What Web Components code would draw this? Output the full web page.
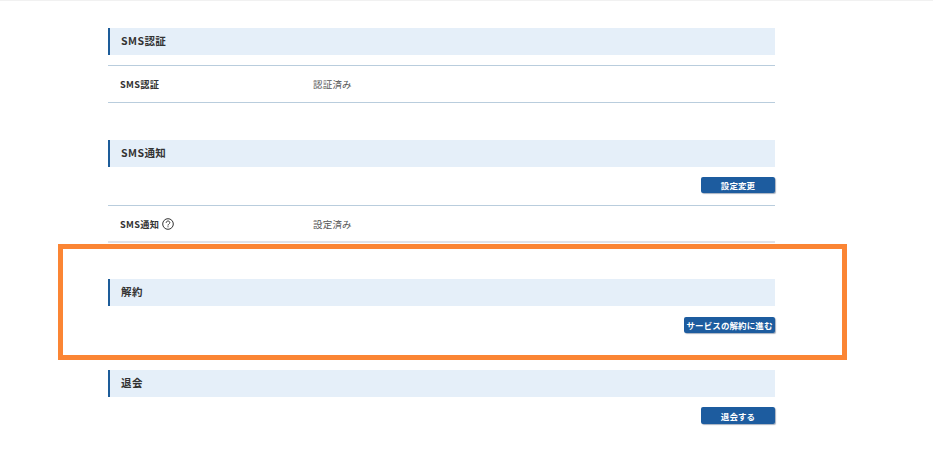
<!DOCTYPE html>
<html lang="ja">
<head>
<meta charset="utf-8">
<style>
html,body{margin:0;padding:0;background:#fff;}
body{width:933px;height:468px;overflow:hidden;position:relative;font-family:"Noto Sans CJK JP","Noto Sans",sans-serif;color:#333;}
</style>
</head>
<body>
<settings-page>
  <settings-section heading="SMS認証" style="height:112px">
    <settings-row label="SMS認証" value="認証済み" style="margin-top:10px"></settings-row>
  </settings-section>
  <settings-section heading="SMS通知" style="height:139px">
    <action-row style="padding:10px 0 12px"><action-button style="width:74px">設定変更</action-button></action-row>
    <settings-row label="SMS通知" value="設定済み" help end="#dfe3ea"></settings-row>
  </settings-section>
  <settings-section heading="解約" style="height:91px">
    <action-row><action-button style="width:91px">サービスの解約に進む</action-button></action-row>
  </settings-section>
  <settings-section heading="退会">
    <action-row style="padding-top:10px"><action-button style="width:74px;height:17px">退会する</action-button></action-row>
  </settings-section>
</settings-page>
<highlight-box></highlight-box>
<script>
function def(name, css, html){
  customElements.define(name, class extends HTMLElement{
    constructor(){super();this.attachShadow({mode:'open'});}
    connectedCallback(){
      this.shadowRoot.innerHTML='<style>'+css+'</style>'+(typeof html==='function'?html(this):html);
    }
  });
}
def('settings-page',
  ':host{display:block;box-sizing:border-box;height:468px;padding:28px 158px 0 108px;background:linear-gradient(#f1f1f1 0,#f1f1f1 1px,#fff 1px);}',
  '<slot></slot>');
def('settings-section',
  ':host{display:block;}'+
  'h2{margin:0;box-sizing:border-box;height:27px;border-left:2px solid #1d5c99;background:#e5eff9;padding:0 0 0 11px;font:700 10.5px/25px "Noto Sans CJK JP",sans-serif;letter-spacing:.45px;color:#333;}',
  h=>'<h2>'+h.getAttribute('heading')+'</h2><slot></slot>');
def('settings-row',
  ':host{display:flex;box-sizing:border-box;height:38px;align-items:center;border-top:1px solid #b9cddd;padding-left:12px;font-size:9.5px;color:#555;}'+
  '.l{width:193px;font-weight:700;font-size:9.2px;letter-spacing:.3px;color:#333;display:flex;align-items:center;gap:3px;}'+
  '.v{letter-spacing:.2px;}svg{display:block;}',
  h=>{
    const end=h.getAttribute('end');
    h.style.borderBottom=end?'2px solid '+end:'1px solid #b9cddd';
    const help=h.hasAttribute('help')?'<svg width="12" height="12" viewBox="0 0 12 12" fill="none" stroke="#333" stroke-width="1"><circle cx="6" cy="6" r="5.3"/><path d="M4.2 4.8c0-1.1.8-1.8 1.8-1.8s1.8.7 1.8 1.6c0 1.3-1.8 1.4-1.8 2.9"/><path d="M6 8.3v1"/></svg>':'';
    return '<div class="l">'+h.getAttribute('label')+help+'</div><div class="v">'+h.getAttribute('value')+'</div>';
  });
def('action-row',
  ':host{display:flex;justify-content:flex-end;padding:11px 0;}',
  '<slot></slot>');
def('action-button',
  ':host{display:flex;box-sizing:border-box;height:16px;align-items:center;justify-content:center;border-radius:2px;background:#1d5c9f;box-shadow:1px 1px 1px rgba(60,80,110,.45);color:#fff;font-size:8.5px;font-weight:700;letter-spacing:.1px;white-space:nowrap;}',
  '<slot></slot>');
def('highlight-box',
  ':host{position:absolute;left:58px;top:244px;width:789px;height:116px;box-sizing:border-box;border:5px solid #fb8534;pointer-events:none;}',
  '');
</script>
</body>
</html>
